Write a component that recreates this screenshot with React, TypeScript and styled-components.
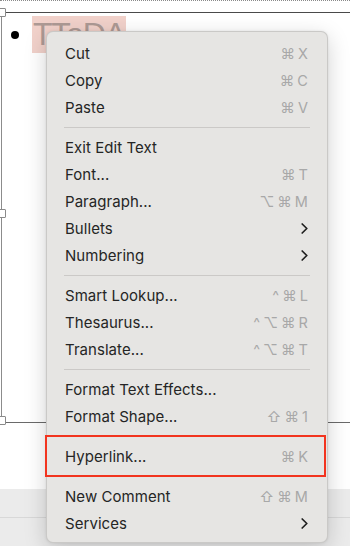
import React from "react";
import styled, { createGlobalStyle } from "styled-components";

const Global = createGlobalStyle`
  html, body { margin: 0; padding: 0; background: #ffffff; overflow: hidden; }
  body { font-family: "Inter", "Liberation Sans", "DejaVu Sans", sans-serif; }
`;

const Page = styled.div`
  position: relative;
  width: 350px;
  height: 546px;
  display: flex;
  flex-direction: column;
  overflow: hidden;
  background: #ffffff;
`;

const DottedRule = styled.div`
  height: 0;
  border-top: 1px dotted #8a8a8a;
  margin-bottom: 11px;
`;

const Slide = styled.div`
  position: relative;
  margin-left: 1px;
  margin-right: -20px;
  height: 411px;
  border-top: 1px solid #4a4a4a;
  border-left: 1px solid #8c8c8c;
  border-bottom: 1px solid #6a6a6a;
  box-sizing: border-box;
`;

const Handle = styled.div<{ $top: string }>`
  position: absolute;
  left: -5px;
  top: ${(p) => p.$top};
  width: 7px;
  height: 7px;
  background: #ffffff;
  border: 1px solid #8a8a8a;
  border-radius: 1px;
`;

const BulletRow = styled.div`
  display: flex;
  align-items: center;
  gap: 13px;
  padding: 3px 0 0 9px;
`;

const Dot = styled.span`
  width: 8px;
  height: 8px;
  border-radius: 50%;
  background: #000;
  flex: none;
`;

const Selected = styled.span`
  background: #f1d1ca;
  color: #ad9994;
  font-family: "Liberation Sans", sans-serif;
  font-size: 32px;
  font-weight: 300;
  line-height: 37px;
  padding: 0 1px;
  letter-spacing: -1.2px;
`;

const Filler = styled.div`
  flex: 1;
`;

const BottomBar = styled.div`
  height: 57px;
  background: #ebebeb;
  display: flex;
  flex-direction: column;
`;

const BarTop = styled.div`
  height: 28px;
  border-bottom: 1px solid #d8d8d8;
`;

const Menu = styled.div`
  position: absolute;
  left: 46px;
  top: 31px;
  width: 282px;
  box-sizing: border-box;
  padding: 8px 0 5px;
  background: #e6e5e3;
  border-radius: 7px;
  border: 0.5px solid rgba(0, 0, 0, 0.12);
  box-shadow: 0 6px 22px rgba(0, 0, 0, 0.18), 0 0 3px rgba(0, 0, 0, 0.08);
`;

const Row = styled.div`
  position: relative;
  height: 27px;
  display: flex;
  align-items: center;
  justify-content: space-between;
  padding: 0 19px 0 18px;
  font-size: 15px;
  color: #252525;
  letter-spacing: 0.05px;
`;

const Keys = styled.span`
  display: flex;
  gap: 3px;
  align-items: center;
  color: #a8a8a8;
  font-size: 14.5px;
  font-family: "Inter", "DejaVu Sans", sans-serif;
`;

const Sep = styled.div`
  height: 13px;
  display: flex;
  align-items: center;
  padding: 0 17px;
  &::after {
    content: "";
    flex: 1;
    height: 1px;
    background: #cbc9c7;
  }
`;

const Callout = styled.div`
  position: absolute;
  left: -2px;
  right: 1px;
  top: -8px;
  bottom: -7px;
  border: 2px solid #f2341f;
  box-sizing: border-box;
  pointer-events: none;
`;

const Chevron = () => (
  <svg width="7" height="11" viewBox="0 0 7 11">
    <path d="M1.2 1 L5.8 5.5 L1.2 10" fill="none" stroke="#1f1f1f" strokeWidth="1.7" strokeLinecap="round" strokeLinejoin="round" />
  </svg>
);

type Item =
  | { kind: "sep" }
  | { kind: "item"; label: string; keys?: string[]; sub?: boolean; callout?: boolean };

const items: Item[] = [
  { kind: "item", label: "Cut", keys: ["⌘", "X"] },
  { kind: "item", label: "Copy", keys: ["⌘", "C"] },
  { kind: "item", label: "Paste", keys: ["⌘", "V"] },
  { kind: "sep" },
  { kind: "item", label: "Exit Edit Text" },
  { kind: "item", label: "Font...", keys: ["⌘", "T"] },
  { kind: "item", label: "Paragraph...", keys: ["⌥", "⌘", "M"] },
  { kind: "item", label: "Bullets", sub: true },
  { kind: "item", label: "Numbering", sub: true },
  { kind: "sep" },
  { kind: "item", label: "Smart Lookup...", keys: ["^", "⌘", "L"] },
  { kind: "item", label: "Thesaurus...", keys: ["^", "⌥", "⌘", "R"] },
  { kind: "item", label: "Translate...", keys: ["^", "⌥", "⌘", "T"] },
  { kind: "sep" },
  { kind: "item", label: "Format Text Effects..." },
  { kind: "item", label: "Format Shape...", keys: ["⇧", "⌘", "1"] },
  { kind: "sep" },
  { kind: "item", label: "Hyperlink...", keys: ["⌘", "K"], callout: true },
  { kind: "sep" },
  { kind: "item", label: "New Comment", keys: ["⇧", "⌘", "M"] },
  { kind: "item", label: "Services", sub: true },
];

export default function App() {
  return (
    <Page>
      <Global />
      <DottedRule />
      <Slide>
        <Handle $top="-5px" />
        <Handle $top="196px" />
        <Handle $top="403px" />
        <BulletRow>
          <Dot />
          <Selected>TTaDA</Selected>
        </BulletRow>
      </Slide>
      <Filler />
      <BottomBar>
        <BarTop />
      </BottomBar>
      <Menu>
        {items.map((it, i) =>
          it.kind === "sep" ? (
            <Sep key={i} />
          ) : (
            <Row key={i}>
              <span>{it.label}</span>
              {it.keys && (
                <Keys>
                  {it.keys.map((k, j) => (
                    <span key={j}>{k}</span>
                  ))}
                </Keys>
              )}
              {it.sub && <Chevron />}
              {it.callout && <Callout />}
            </Row>
          )
        )}
      </Menu>
    </Page>
  );
}
